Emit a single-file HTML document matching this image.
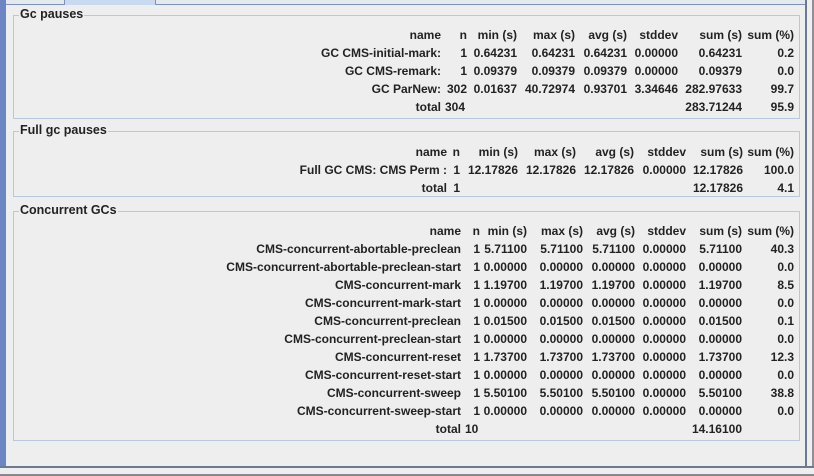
<!DOCTYPE html>
<html><head><style>
*{margin:0;padding:0;box-sizing:border-box}
body{width:814px;height:476px;background:#eeeeee;position:relative;overflow:hidden;font-family:"Liberation Sans",Arial,sans-serif;font-size:12px;font-weight:bold;color:#222}
.lbar{position:absolute;left:0;top:0;width:6px;height:476px;background:#6b86c0}
.tabs{position:absolute;left:6px;top:0;width:800px;height:5px;background:#e4e8ef;border-bottom:1px solid #7d93b5}
.tab{position:absolute;top:0;height:5px;left:58px;width:92px;background:#c9daf0;border-left:1px solid #7d93b5;border-right:1px solid #7d93b5}
.rbar{position:absolute;right:0;top:0;width:9px;height:476px;background:#eee;border-left:2px solid #6b7a90;border-right:2px solid #909090}
.bbar{position:absolute;left:0;bottom:0;width:814px;height:10px;background:#eee;border-top:2px solid #6b7a90;border-bottom:2px solid #888}
.box{position:absolute;left:13px;width:787px;border:1px solid #b8c8dc}
.ttl{position:absolute;left:5px;top:-9px;background:#eee;padding:0 1px;font-size:12.5px;color:#222}
table{position:absolute;border-collapse:collapse}
td{text-align:right;height:18px;padding:0;white-space:nowrap}
</style></head><body>
<div class="lbar"></div><div class="tabs"><div class="tab"></div></div>
<div class="box" style="top:15px;height:104px"><span class="ttl">Gc pauses</span></div>
<table style="left:20px;top:26px">
<colgroup><col style="width:421px"><col style="width:26px"><col style="width:50px"><col style="width:58px"><col style="width:52px"><col style="width:51px"><col style="width:64px"><col style="width:52px"></colgroup>
<tr><td>name</td><td>n</td><td>min (s)</td><td>max (s)</td><td>avg (s)</td><td>stddev</td><td>sum (s)</td><td>sum (%)</td></tr>
<tr><td>GC CMS-initial-mark:</td><td>1</td><td>0.64231</td><td>0.64231</td><td>0.64231</td><td>0.00000</td><td>0.64231</td><td>0.2</td></tr>
<tr><td>GC CMS-remark:</td><td>1</td><td>0.09379</td><td>0.09379</td><td>0.09379</td><td>0.00000</td><td>0.09379</td><td>0.0</td></tr>
<tr><td>GC ParNew:</td><td>302</td><td>0.01637</td><td>40.72974</td><td>0.93701</td><td>3.34646</td><td>282.97633</td><td>99.7</td></tr>
<tr><td>total</td><td style="text-align:left;padding-left:4px">304</td><td></td><td></td><td></td><td></td><td>283.71244</td><td>95.9</td></tr>
</table>
<div class="box" style="top:131px;height:66px"><span class="ttl">Full gc pauses</span></div>
<table style="left:20px;top:143px">
<colgroup><col style="width:427px"><col style="width:13px"><col style="width:58px"><col style="width:58px"><col style="width:58px"><col style="width:52px"><col style="width:57px"><col style="width:51px"></colgroup>
<tr><td>name</td><td>n</td><td>min (s)</td><td>max (s)</td><td>avg (s)</td><td>stddev</td><td>sum (s)</td><td>sum (%)</td></tr>
<tr><td>Full GC CMS: CMS Perm :</td><td>1</td><td>12.17826</td><td>12.17826</td><td>12.17826</td><td>0.00000</td><td>12.17826</td><td>100.0</td></tr>
<tr><td>total</td><td>1</td><td></td><td></td><td></td><td></td><td>12.17826</td><td>4.1</td></tr>
</table>
<div class="box" style="top:211px;height:230px"><span class="ttl">Concurrent GCs</span></div>
<table style="left:20px;top:222px">
<colgroup><col style="width:441px"><col style="width:19px"><col style="width:47px"><col style="width:56px"><col style="width:52px"><col style="width:51px"><col style="width:56px"><col style="width:52px"></colgroup>
<tr><td>name</td><td>n</td><td>min (s)</td><td>max (s)</td><td>avg (s)</td><td>stddev</td><td>sum (s)</td><td>sum (%)</td></tr>
<tr><td>CMS-concurrent-abortable-preclean</td><td>1</td><td>5.71100</td><td>5.71100</td><td>5.71100</td><td>0.00000</td><td>5.71100</td><td>40.3</td></tr>
<tr><td>CMS-concurrent-abortable-preclean-start</td><td>1</td><td>0.00000</td><td>0.00000</td><td>0.00000</td><td>0.00000</td><td>0.00000</td><td>0.0</td></tr>
<tr><td>CMS-concurrent-mark</td><td>1</td><td>1.19700</td><td>1.19700</td><td>1.19700</td><td>0.00000</td><td>1.19700</td><td>8.5</td></tr>
<tr><td>CMS-concurrent-mark-start</td><td>1</td><td>0.00000</td><td>0.00000</td><td>0.00000</td><td>0.00000</td><td>0.00000</td><td>0.0</td></tr>
<tr><td>CMS-concurrent-preclean</td><td>1</td><td>0.01500</td><td>0.01500</td><td>0.01500</td><td>0.00000</td><td>0.01500</td><td>0.1</td></tr>
<tr><td>CMS-concurrent-preclean-start</td><td>1</td><td>0.00000</td><td>0.00000</td><td>0.00000</td><td>0.00000</td><td>0.00000</td><td>0.0</td></tr>
<tr><td>CMS-concurrent-reset</td><td>1</td><td>1.73700</td><td>1.73700</td><td>1.73700</td><td>0.00000</td><td>1.73700</td><td>12.3</td></tr>
<tr><td>CMS-concurrent-reset-start</td><td>1</td><td>0.00000</td><td>0.00000</td><td>0.00000</td><td>0.00000</td><td>0.00000</td><td>0.0</td></tr>
<tr><td>CMS-concurrent-sweep</td><td>1</td><td>5.50100</td><td>5.50100</td><td>5.50100</td><td>0.00000</td><td>5.50100</td><td>38.8</td></tr>
<tr><td>CMS-concurrent-sweep-start</td><td>1</td><td>0.00000</td><td>0.00000</td><td>0.00000</td><td>0.00000</td><td>0.00000</td><td>0.0</td></tr>
<tr><td>total</td><td style="text-align:left;padding-left:4px">10</td><td></td><td></td><td></td><td></td><td>14.16100</td><td></td></tr>
</table>
<div class="rbar"></div><div class="bbar"></div>
</body></html>
